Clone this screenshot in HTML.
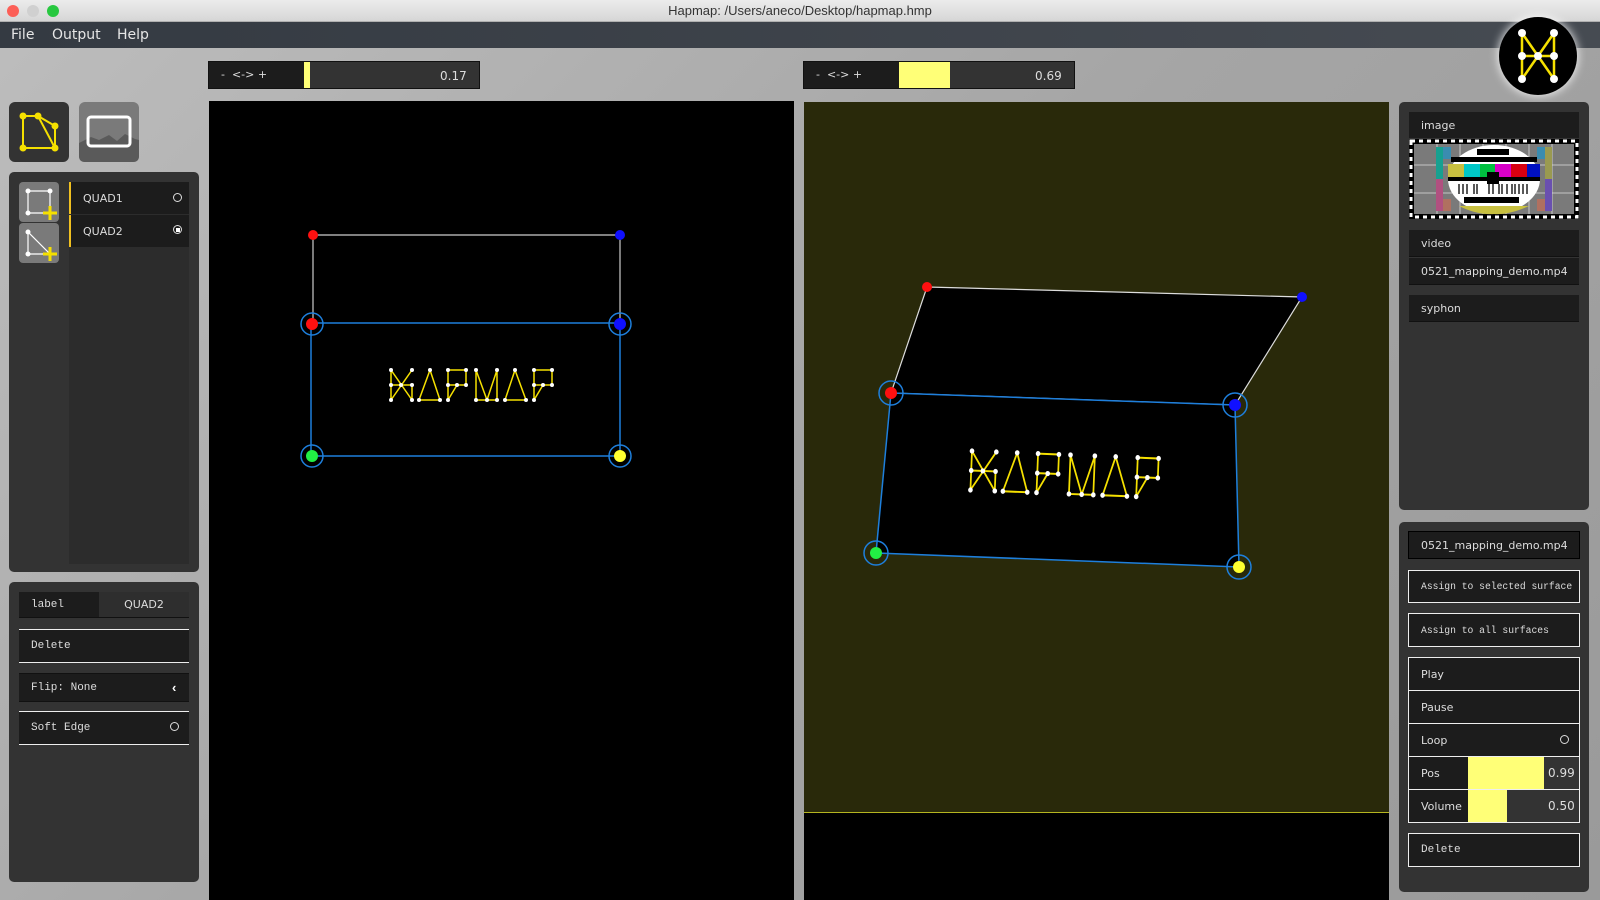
<!DOCTYPE html>
<html><head><meta charset="utf-8"><style>
*{margin:0;padding:0;box-sizing:border-box}
body{width:1600px;height:900px;overflow:hidden;position:relative;background:linear-gradient(135deg,#bdbdbd 0%,#a5a5a5 50%,#9a9a9a 100%);font-family:"Liberation Sans",sans-serif;}
.a{position:absolute}
.mono{font-family:"Liberation Mono","DejaVu Sans Mono",monospace;font-size:11px;color:#ddd;white-space:nowrap}
.sans{font-family:"DejaVu Sans","Liberation Sans",sans-serif;font-size:11px;color:#ddd;white-space:nowrap}
.row{position:absolute;background:#1c1c1c;display:flex;align-items:center;padding-left:12px}
</style></head><body>
<div class="a" style="left:0;top:0;width:1600px;height:22px;background:linear-gradient(#ececec,#d6d6d6);border-bottom:1px solid #b0b0b0"></div>
<div class="a" style="left:7px;top:5px;width:12px;height:12px;border-radius:6px;background:#fc5f57"></div>
<div class="a" style="left:27px;top:5px;width:12px;height:12px;border-radius:6px;background:#d0d0d0"></div>
<div class="a" style="left:47px;top:5px;width:12px;height:12px;border-radius:6px;background:#28c840"></div>
<div class="a" style="left:0;top:3px;width:1600px;text-align:center;font-size:13px;color:#333">Hapmap: /Users/aneco/Desktop/hapmap.hmp</div>
<div class="a" style="left:0;top:22px;width:1600px;height:26px;background:linear-gradient(90deg,#343a42,#464b52)"></div>
<div class="a" style="left:11px;top:27px;font-size:14px;color:#e6e6e6;font-family:'DejaVu Sans',sans-serif">File</div>
<div class="a" style="left:52px;top:27px;font-size:14px;color:#e6e6e6;font-family:'DejaVu Sans',sans-serif">Output</div>
<div class="a" style="left:117px;top:27px;font-size:14px;color:#e6e6e6;font-family:'DejaVu Sans',sans-serif">Help</div>
<div class="a" style="left:1499px;top:17px;width:78px;height:78px;border-radius:39px;background:#000;box-shadow:0 0 10px #fff"></div>
<svg class="a" style="left:1499px;top:17px" width="78" height="78"><g stroke="#f5e000" stroke-width="2.5" fill="none"><path d="M23 16V62M55 16V62M23 16L55 62M55 16L23 62M23 39H55"/></g><g fill="#fff"><circle cx="23" cy="16" r="4"/><circle cx="55" cy="16" r="4"/><circle cx="23" cy="39" r="4"/><circle cx="39" cy="39" r="4"/><circle cx="55" cy="39" r="4"/><circle cx="23" cy="62" r="4"/><circle cx="55" cy="62" r="4"/></g></svg>
<div class="a" style="left:208px;top:61px;width:272px;height:28px;background:#333;border:1px solid #111"></div>
<div class="a" style="left:209px;top:62px;width:95px;height:26px;background:#1c1c1c"></div>
<div class="a" style="left:304px;top:62px;width:6px;height:26px;background:#ffff77"></div>
<div class="a sans" style="left:221px;top:68px">-&nbsp; &lt;-&gt; +</div>
<div class="a sans" style="left:440px;top:69px;font-size:12px">0.17</div>
<div class="a" style="left:803px;top:61px;width:272px;height:28px;background:#333;border:1px solid #111"></div>
<div class="a" style="left:804px;top:62px;width:95px;height:26px;background:#1c1c1c"></div>
<div class="a" style="left:899px;top:62px;width:51px;height:26px;background:#ffff77"></div>
<div class="a sans" style="left:816px;top:68px">-&nbsp; &lt;-&gt; +</div>
<div class="a sans" style="left:1035px;top:69px;font-size:12px">0.69</div>
<div class="a" style="left:209px;top:101px;width:585px;height:799px;background:#000"></div>
<div class="a" style="left:804px;top:102px;width:585px;height:710px;background:#29290a"></div>
<div class="a" style="left:804px;top:812px;width:585px;height:88px;background:#000;border-top:1px solid #b5b520"></div>
<svg class="a" style="left:0;top:0" width="1600" height="900">
<defs>
<g id="hm" fill="none">
<g stroke="#f5e000" stroke-width="1.5">
<path d="M391 370V400M391 370L412 400M412 370L391 400M391 385H412M412 385V400"/>
<path d="M430 370L419 400H440Z"/>
<path d="M448 400V370H466V385H448M448 400L457 385"/>
<path d="M476 400V370L487 400L497 370V400H476"/>
<path d="M515 370L505 400H526Z"/>
<path d="M534 400V370H552V385H534M534 400L543 385"/>
</g>
<g fill="#fff"><circle cx="391" cy="370" r="2"/><circle cx="412" cy="370" r="2"/><circle cx="391" cy="385" r="2"/><circle cx="401" cy="385" r="2"/><circle cx="412" cy="385" r="2"/><circle cx="391" cy="400" r="2"/><circle cx="412" cy="400" r="2"/><circle cx="430" cy="370" r="2"/><circle cx="419" cy="400" r="2"/><circle cx="440" cy="400" r="2"/><circle cx="448" cy="370" r="2"/><circle cx="466" cy="370" r="2"/><circle cx="448" cy="385" r="2"/><circle cx="466" cy="385" r="2"/><circle cx="457" cy="385" r="2"/><circle cx="448" cy="400" r="2"/><circle cx="476" cy="370" r="2"/><circle cx="497" cy="370" r="2"/><circle cx="476" cy="400" r="2"/><circle cx="487" cy="400" r="2"/><circle cx="497" cy="400" r="2"/><circle cx="515" cy="370" r="2"/><circle cx="505" cy="400" r="2"/><circle cx="526" cy="400" r="2"/><circle cx="534" cy="370" r="2"/><circle cx="552" cy="370" r="2"/><circle cx="534" cy="385" r="2"/><circle cx="543" cy="385" r="2"/><circle cx="552" cy="385" r="2"/><circle cx="534" cy="400" r="2"/></g>
</g>
</defs>
<path d="M313 235H620V323M313 235V323" stroke="#ccc" stroke-width="1.2" fill="none"/>
<path d="M311 323H620V456H311Z" stroke="#1e7fdc" stroke-width="1.5" fill="none"/>
<use href="#hm"/>
<circle cx="313" cy="235" r="5" fill="#ff1010"/><circle cx="620" cy="235" r="5" fill="#1010ff"/>
<g fill="none" stroke="#1e7fdc" stroke-width="1.5"><circle cx="312" cy="324" r="11"/><circle cx="620" cy="324" r="11"/><circle cx="312" cy="456" r="11"/><circle cx="620" cy="456" r="11"/></g>
<circle cx="312" cy="324" r="6" fill="#ff1010"/><circle cx="620" cy="324" r="6" fill="#1010ff"/><circle cx="312" cy="456" r="6" fill="#22ee44"/><circle cx="620" cy="456" r="6" fill="#ffff30"/>
<path d="M927 287L1302 297L1235 405L891 393Z" fill="#000" stroke="#ddd" stroke-width="1.2"/>
<path d="M891 393L1235 405L1239 567L876 553Z" fill="#000" stroke="#1e7fdc" stroke-width="1.5"/>
<use href="#hm" transform="translate(972,451) rotate(2.3) scale(1.16,1.3) translate(-391,-370)"/>
<circle cx="927" cy="287" r="5" fill="#ff1010"/><circle cx="1302" cy="297" r="5" fill="#1010ff"/>
<g fill="none" stroke="#1e7fdc" stroke-width="1.5"><circle cx="891" cy="393" r="12"/><circle cx="1235" cy="405" r="12"/><circle cx="876" cy="553" r="12"/><circle cx="1239" cy="567" r="12"/></g>
<circle cx="891" cy="393" r="6" fill="#ff1010"/><circle cx="1235" cy="405" r="6" fill="#1010ff"/><circle cx="876" cy="553" r="6" fill="#22ee44"/><circle cx="1239" cy="567" r="6" fill="#ffff30"/>
</svg>
<div class="a" style="left:9px;top:102px;width:60px;height:60px;border-radius:6px;background:#333"></div>
<svg class="a" style="left:9px;top:102px" width="60" height="60"><g stroke="#f5e000" stroke-width="2" fill="none"><path d="M14 14H29L46 46H14ZM29 14L46 24V46"/></g><g fill="#f5e000"><circle cx="14" cy="14" r="3.5"/><circle cx="29" cy="14" r="3.5"/><circle cx="46" cy="24" r="3.5"/><circle cx="46" cy="46" r="3.5"/><circle cx="14" cy="46" r="3.5"/></g></svg>
<div class="a" style="left:79px;top:102px;width:60px;height:60px;border-radius:6px;background:#7a7a7a;overflow:hidden"></div>
<svg class="a" style="left:79px;top:102px" width="60" height="60"><path d="M0 41L12 35L20 38L30 33L38 39L46 32L56 37L60 38V54Q60 60 54 60H6Q0 60 0 54Z" fill="#5a5a5a"/><rect x="9" y="15" width="42" height="29" rx="3" fill="none" stroke="#fff" stroke-width="3"/></svg>
<div class="a" style="left:9px;top:172px;width:190px;height:400px;border-radius:5px;background:#333"></div>
<div class="a" style="left:69px;top:182px;width:120px;height:382px;background:#2c2c2c"></div>
<div class="a" style="left:19px;top:182px;width:40px;height:40px;border-radius:4px;background:#7a7a7a"></div>
<svg class="a" style="left:19px;top:182px" width="40" height="40"><path d="M9 9H31V31H9Z" fill="none" stroke="#fff" stroke-width="1.2"/><g fill="#fff"><circle cx="9" cy="9" r="2.5"/><circle cx="31" cy="9" r="2.5"/><circle cx="9" cy="31" r="2.5"/></g><path d="M31 24V38M24 31H38" stroke="#f5e000" stroke-width="3"/></svg>
<div class="a" style="left:19px;top:223px;width:40px;height:40px;border-radius:4px;background:#7a7a7a"></div>
<svg class="a" style="left:19px;top:223px" width="40" height="40"><path d="M9 9V31H31Z" fill="none" stroke="#fff" stroke-width="1.2"/><g fill="#fff"><circle cx="9" cy="9" r="2.5"/><circle cx="9" cy="31" r="2.5"/></g><path d="M31 24V38M24 31H38" stroke="#f5e000" stroke-width="3"/></svg>
<div class="row sans" style="left:69px;top:182px;width:120px;height:32px;border-left:2px solid #f0c020;font-size:11px">QUAD1</div>
<div class="a" style="left:173px;top:193px;width:9px;height:9px;border:1px solid #ddd;border-radius:5px"></div>
<div class="row sans" style="left:69px;top:215px;width:120px;height:32px;border-left:2px solid #f0c020;font-size:11px">QUAD2</div>
<div class="a" style="left:173px;top:225px;width:9px;height:9px;border:1px solid #ddd;border-radius:5px"></div>
<div class="a" style="left:176px;top:228px;width:4px;height:4px;background:#fff"></div>
<div class="a" style="left:9px;top:582px;width:190px;height:300px;border-radius:5px;background:#333"></div>
<div class="row mono" style="left:19px;top:592px;width:80px;height:26px;border-bottom:1px solid #111">label</div>
<div class="a sans" style="left:99px;top:592px;width:90px;height:26px;background:#2e2e2e;border-bottom:1px solid #111;text-align:center;line-height:26px">QUAD2</div>
<div class="row mono" style="left:19px;top:629px;width:170px;height:34px;border-top:1px solid #eee;border-bottom:1px solid #eee">Delete</div>
<div class="row mono" style="left:19px;top:673px;width:170px;height:29px;border-top:1px solid #111;border-bottom:1px solid #111">Flip: None</div>
<div class="a" style="left:172px;top:680px;color:#fff;font-size:13px;font-weight:bold">&lsaquo;</div>
<div class="row mono" style="left:19px;top:711px;width:170px;height:34px;border-top:1px solid #eee;border-bottom:1px solid #eee">Soft Edge</div>
<div class="a" style="left:170px;top:722px;width:9px;height:9px;border:1px solid #ddd;border-radius:5px"></div>
<div class="a" style="left:1399px;top:102px;width:190px;height:408px;border-radius:5px;background:#333"></div>
<div class="row sans" style="left:1409px;top:112px;width:170px;height:26px">image</div>
<svg class="a" style="left:1409px;top:139px" width="170" height="80">
<rect width="170" height="80" fill="#000"/>
<rect x="2" y="2" width="166" height="76" fill="none" stroke="#fff" stroke-width="3" stroke-dasharray="4 4"/>
<rect x="5" y="5" width="160" height="70" fill="#7a7a7a"/>
<g stroke="#ddd" stroke-width="0.8"><path d="M5 26H165M5 54H165M28 5V75M51 5V75M74 5V75M97 5V75M120 5V75M143 5V75"/></g>
<rect x="27" y="8" width="7" height="32" fill="#17a090"/><rect x="34" y="8" width="8" height="12" fill="#3a8cb0"/><rect x="27" y="40" width="7" height="32" fill="#b05080"/><rect x="34" y="60" width="8" height="12" fill="#b07060"/>
<rect x="136" y="8" width="7" height="32" fill="#9a9a50"/><rect x="128" y="8" width="8" height="12" fill="#3a8cb0"/><rect x="136" y="40" width="7" height="32" fill="#6a50b0"/><rect x="128" y="60" width="8" height="12" fill="#b07060"/>
<ellipse cx="85" cy="40" rx="46" ry="34" fill="#fff"/>
<rect x="39" y="25" width="16" height="13" fill="#c8c040"/><rect x="55" y="25" width="16" height="13" fill="#00c8c8"/><rect x="71" y="25" width="15" height="13" fill="#00c040"/><rect x="86" y="25" width="16" height="13" fill="#d800c8"/><rect x="102" y="25" width="16" height="13" fill="#d80010"/><rect x="118" y="25" width="13" height="13" fill="#0010c0"/>
<rect x="68" y="10" width="32" height="6" fill="#000"/><rect x="42" y="18" width="86" height="5" fill="#000"/>
<rect x="39" y="38" width="92" height="4" fill="#000"/>
<g stroke="#222" stroke-width="1.5"><path d="M50 45V55M54 45V55M58 45V55M65 45V55M68 45V55M80 45V55M84 45V55M90 45V55M93 45V55M98 45V55M103 45V55M106 45V55M110 45V55M114 45V55M118 45V55"/></g>
<rect x="78" y="33" width="12" height="12" fill="#000"/>
<rect x="55" y="58" width="55" height="6" fill="#000"/>
<path d="M50 67H120Q100 76 85 75Q68 76 50 67Z" fill="#c8c040"/>
</svg>
<div class="row sans" style="left:1409px;top:230px;width:170px;height:27px;border-bottom:1px solid #111">video</div>
<div class="row sans" style="left:1409px;top:258px;width:170px;height:27px;border-bottom:1px solid #111">0521_mapping_demo.mp4</div>
<div class="row sans" style="left:1409px;top:295px;width:170px;height:27px;border-bottom:1px solid #111">syphon</div>
<div class="a" style="left:1399px;top:522px;width:190px;height:370px;border-radius:5px;background:#333"></div>
<div class="row sans" style="left:1408px;top:531px;width:172px;height:28px;border:1px solid #000">0521_mapping_demo.mp4</div>
<div class="row mono" style="left:1408px;top:570px;width:172px;height:33px;border:1px solid #eee;font-size:9.7px">Assign to selected surface</div>
<div class="row mono" style="left:1408px;top:613px;width:172px;height:34px;border:1px solid #eee;font-size:9.7px">Assign to all surfaces</div>
<div class="row sans" style="left:1408px;top:657px;width:172px;height:34px;border:1px solid #eee">Play</div>
<div class="row sans" style="left:1408px;top:690px;width:172px;height:34px;border:1px solid #eee">Pause</div>
<div class="row sans" style="left:1408px;top:723px;width:172px;height:34px;border:1px solid #eee">Loop</div>
<div class="a" style="left:1560px;top:735px;width:9px;height:9px;border:1px solid #ddd;border-radius:5px"></div>
<div class="row sans" style="left:1408px;top:756px;width:172px;height:34px;border:1px solid #eee">Pos</div>
<div class="a" style="left:1468px;top:757px;width:111px;height:32px;background:#333"></div>
<div class="a" style="left:1468px;top:757px;width:76px;height:32px;background:#ffff77"></div>
<div class="a sans" style="left:1548px;top:766px;font-size:12px">0.99</div>
<div class="row sans" style="left:1408px;top:789px;width:172px;height:34px;border:1px solid #eee">Volume</div>
<div class="a" style="left:1468px;top:790px;width:111px;height:32px;background:#333"></div>
<div class="a" style="left:1468px;top:790px;width:39px;height:32px;background:#ffff77"></div>
<div class="a sans" style="left:1548px;top:799px;font-size:12px">0.50</div>
<div class="row mono" style="left:1408px;top:833px;width:172px;height:34px;border:1px solid #eee">Delete</div>
</body></html>
